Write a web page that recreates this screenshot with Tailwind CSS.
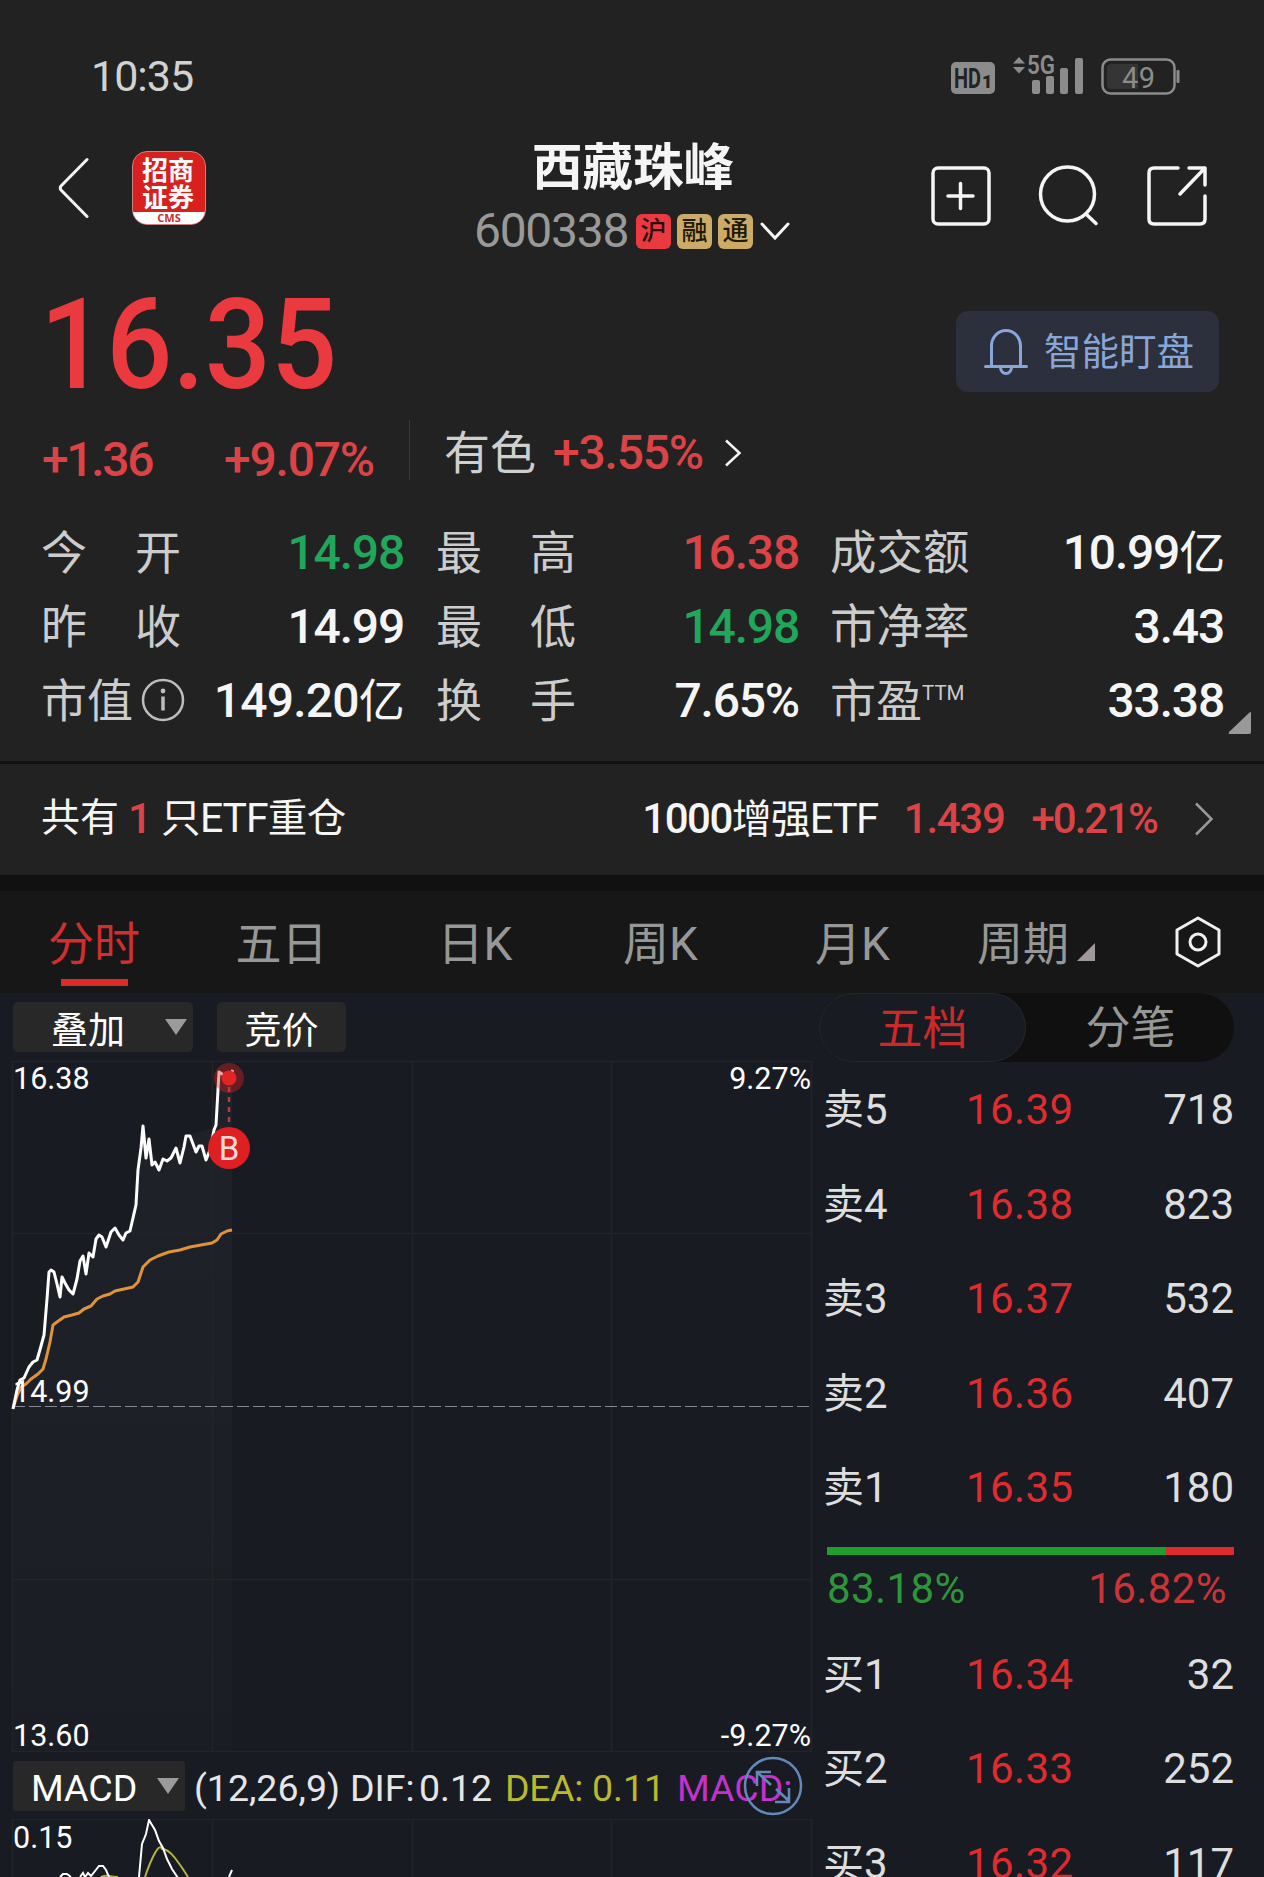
<!DOCTYPE html>
<html lang="zh-CN">
<head>
  <meta charset="UTF-8">
  <meta name="viewport" content="width=device-width, initial-scale=1.0">
  <script src="https://cdn.jsdelivr.net/npm/@tailwindcss/browser@4"></script>
  <title>西藏珠峰 600338</title>
</head>
<body class="w-[1264px] h-[1877px] overflow-hidden bg-[#191b23] font-[Roboto,'Noto_Sans_CJK_SC',sans-serif] leading-none whitespace-nowrap text-[#f5f5f5]">

  <div class="bg-[#222222] h-[761px]">
    <!-- Status bar -->
    <div class="h-[110px] pt-[41px] pl-[91px] pr-[83px] flex justify-between">
      <div class="h-[70px] flex items-center text-[43px] tracking-[-1px] text-[#d2d2d2]">10:35</div>
      <svg width="230" height="50" viewBox="950 50 230 50" class="mt-[9px]">
        <rect x="950" y="62" width="44" height="32" rx="5" fill="#8c8c8c"/>
        <text x="953" y="88" font-size="28" font-weight="700" textLength="27" lengthAdjust="spacingAndGlyphs" fill="#222">HD</text>
        <text x="981" y="88" font-size="18" font-weight="900" fill="#222">1</text>
        <path d="M1018 57l6 6.500h-12zM1018 73.500l6-6.500h-12z" fill="#8c8c8c"/>
        <text x="1026" y="74" font-size="25" font-weight="600" textLength="28" lengthAdjust="spacingAndGlyphs" fill="#8c8c8c">5G</text>
        <g fill="#8c8c8c">
          <rect x="1031" y="80" width="8" height="14" rx="2"/>
          <rect x="1045" y="76" width="8" height="18" rx="2"/>
          <rect x="1059" y="68" width="8" height="26" rx="2"/>
          <rect x="1074" y="58" width="8" height="36" rx="2"/>
        </g>
        <rect x="1101.500" y="59.500" width="72" height="34" rx="8" fill="none" stroke="#8c8c8c" stroke-width="2.500"/>
        <path d="M1110 64h27v25h-27q-4 0-4-4v-17q0-4 4-4z" fill="#353535"/>
        <rect x="1175.500" y="70" width="3" height="13" rx="1" fill="#8c8c8c"/>
        <text x="1121" y="87.500" font-size="29" textLength="33" fill="#8c8c8c">49</text>
      </svg>
    </div>

    <!-- Header -->
    <div class="h-[160px] flex items-start">
      <svg width="32" height="62" viewBox="0 0 32 62" class="ml-[58px] mt-[47px]" fill="none" stroke="#f5f5f5" stroke-width="3" stroke-linecap="round" stroke-linejoin="round"><path d="M29 2.500L3 29Q1.500 31 3 33L29 59.500"/></svg>
      <div class="ml-[42px] mt-[41px] w-[74px] h-[74px] rounded-[15px] overflow-hidden bg-[#d8201f] border border-[#c98080] flex flex-col items-center font-['Noto_Sans_CJK_SC',sans-serif] font-bold">
        <div class="w-[54px] h-[60px] pt-[3px] text-[26px] leading-[27px] whitespace-normal text-white">招商证券</div>
        <div class="w-full h-[12px] bg-white text-center text-[#c8302c] text-[11px] leading-[11px] font-['Open_Sans']">CMS</div>
      </div>
      <div class="ml-[267px] w-[320px] pt-[29px]">
        <h1 class="h-[56px] flex items-center justify-center text-[50.500px] font-bold pt-[2px]">西藏珠峰</h1>
        <div class="h-[72px] flex items-center">
          <span class="text-[48px] tracking-[-1.300px] text-[#999999] w-[163px] pl-[1px]">600338</span>
          <span class="w-[35px] h-[35px] rounded-[6px] bg-[#ea3a40] text-[#2b0a0c] text-[26px] font-medium flex items-center justify-center">沪</span>
          <span class="ml-[6px] w-[35px] h-[35px] rounded-[6px] bg-[#ccaa68] text-[#221a08] text-[26px] font-medium flex items-center justify-center">融</span>
          <span class="ml-[6px] w-[35px] h-[35px] rounded-[6px] bg-[#ccaa68] text-[#221a08] text-[26px] font-medium flex items-center justify-center">通</span>
          <svg width="32" height="20" viewBox="0 0 32 20" class="ml-[6px]" fill="none" stroke="#f5f5f5" stroke-width="3" stroke-linecap="round"><path d="M3 3l13 14L29 3"/></svg>
        </div>
      </div>
      <div class="ml-[137px] mt-[55px] flex gap-[46px] items-start">
        <svg width="62" height="62" viewBox="0 0 62 62" fill="none" stroke="#f5f5f5" stroke-width="3.500" stroke-linecap="round"><rect x="3" y="3" width="56" height="56" rx="5"/><path d="M18 31h25M30.500 18.500v25"/></svg>
        <svg width="62" height="62" viewBox="0 0 62 62" fill="none" stroke="#f5f5f5" stroke-width="3.500" stroke-linecap="round"><circle cx="29.500" cy="29" r="27"/><path d="M48 49l10 9.500"/></svg>
        <svg width="62" height="62" viewBox="0 0 62 62" fill="none" stroke="#f5f5f5" stroke-width="3.500" stroke-linecap="round" stroke-linejoin="round"><path d="M32 3H8Q3 3 3 8v46q0 5 5 5h46q5 0 5-5V31M43 3h16v17M59 3L34 29"/></svg>
      </div>
    </div>

    <!-- Price -->
    <div class="h-[150px] flex">
      <div class="w-[956px] pl-[40px] pt-[12px] text-[126px] font-medium text-[#ea3a40]"><span class="inline-block origin-left scale-x-[0.925]">16.35</span></div>
      <button class="mt-[41px] w-[263px] h-[81px] rounded-[12px] bg-[#2b303c] text-[#8aa5d8] flex items-center">
        <svg width="46" height="48" viewBox="0 0 46 48" class="ml-[27px]" fill="none" stroke="#8aa5d8" stroke-width="3" stroke-linecap="round"><path d="M2.500 38.500h41M8.500 38V18a14.500 15.500 0 0 1 29 0v20M17.500 39.500a5.500 6 0 0 0 11 0"/></svg>
        <span class="ml-[15px] text-[37.500px] pt-[2px]">智能盯盘</span>
      </button>
    </div>

    <div class="h-[86px] flex text-[48px] font-medium text-[#dc4347]">
      <div class="w-[182px] pl-[42px] pt-[16px] tracking-[-2.300px]">+1.36</div>
      <div class="w-[227px] pl-[42px] pt-[16px] tracking-[-1.200px]">+9.07%</div>
      <div class="w-px h-[60px] bg-[#383838]"></div>
      <div class="w-[143px] pl-[34px] pt-[10px] text-[46px] font-normal text-[#cfcfcf]">有色</div>
      <div class="w-[171px] tracking-[-1.200px] pt-[9px]">+3.55%</div>
      <svg width="18" height="28" viewBox="0 0 18 28" class="mt-[19px]" fill="none" stroke="#f5f5f5" stroke-width="2.500"><path d="M2 1.500L15.500 14 2 26.500"/></svg>
    </div>

    <!-- Quote stats -->
    <div class="relative pt-[9px] pl-[41px] grid grid-cols-[363px_395px_425px] auto-rows-[74px] items-center text-[48px] font-medium tracking-[-1.200px]">
      <div class="flex justify-between items-center"><span class="w-[140px] flex justify-between text-[46px] font-normal tracking-normal text-[#cccccc] pt-[2px]"><i class="not-italic">今</i><i class="not-italic">开</i></span><span class="pt-[2px] text-[#21a75c]">14.98</span></div>
      <div class="pl-[32px] flex justify-between items-center"><span class="w-[140px] flex justify-between text-[46px] font-normal tracking-normal text-[#cccccc] pt-[2px]"><i class="not-italic">最</i><i class="not-italic">高</i></span><span class="pt-[2px] text-[#dc4347]">16.38</span></div>
      <div class="pl-[31px] flex justify-between items-center"><span class="text-[46.500px] font-normal tracking-normal text-[#cccccc] pt-[2px]">成交额</span><span class="pt-[2px]">10.99<span class="text-[46px] font-normal">亿</span></span></div>

      <div class="flex justify-between items-center"><span class="w-[140px] flex justify-between text-[46px] font-normal tracking-normal text-[#cccccc] pt-[2px]"><i class="not-italic">昨</i><i class="not-italic">收</i></span><span class="pt-[2px]">14.99</span></div>
      <div class="pl-[32px] flex justify-between items-center"><span class="w-[140px] flex justify-between text-[46px] font-normal tracking-normal text-[#cccccc] pt-[2px]"><i class="not-italic">最</i><i class="not-italic">低</i></span><span class="pt-[2px] text-[#21a75c]">14.98</span></div>
      <div class="pl-[31px] flex justify-between items-center"><span class="text-[46.500px] font-normal tracking-normal text-[#cccccc] pt-[2px]">市净率</span><span class="pt-[2px]">3.43</span></div>

      <div class="flex justify-between items-center">
        <span class="flex items-center text-[46px] font-normal tracking-normal text-[#cccccc]"><span class="pt-[2px]">市值</span>
          <svg width="44" height="44" viewBox="0 0 44 44" class="ml-[8px]" fill="none" stroke="#bdbdbd" stroke-width="2.500"><circle cx="22" cy="22" r="20"/><path d="M22 18.500v14" stroke-width="3.500"/><circle cx="22" cy="13" r="2.400" fill="#bdbdbd" stroke="none"/></svg>
        </span>
        <span class="pt-[2px] tracking-[-0.800px]">149.20<span class="text-[46px] font-normal">亿</span></span>
      </div>
      <div class="pl-[32px] flex justify-between items-center"><span class="w-[140px] flex justify-between text-[46px] font-normal tracking-normal text-[#cccccc] pt-[2px]"><i class="not-italic">换</i><i class="not-italic">手</i></span><span class="pt-[2px]">7.65%</span></div>
      <div class="pl-[31px] flex justify-between items-center"><span class="flex text-[46px] font-normal tracking-normal text-[#cccccc] pt-[2px]">市盈<span class="mt-[5px] text-[20.500px]">TTM</span></span><span class="pt-[2px]">33.38</span></div>
      <svg width="24" height="24" viewBox="0 0 24 24" class="absolute left-[1228px] top-[205px]"><path d="M23 2v19q0 2-2 2H2q-2 0-1-2L21 2q2-2 2 0z" fill="#999"/></svg>
    </div>
  </div>

  <!-- ETF holdings -->
  <div class="h-[130px] bg-[#222222] border-t-[3px] border-b-16 border-[#111111] flex items-center pl-[41px] pr-[50px] pb-[2px] text-[42px]">
    <span class="w-[87px] text-[39px]">共有</span>
    <span class="w-[33px] text-[#dc4347] font-medium">1</span>
    <span class="text-[39.500px] tracking-[-0.600px]">只<span class="text-[41px] tracking-[-1px]">ETF</span>重仓</span>
    <span class="ml-auto tracking-[-1px]"><span class="font-medium tracking-[-1.500px]">1000</span><span class="text-[40px]">增强</span><span class="tracking-[-1.500px]">ETF</span></span>
    <span class="ml-[26px] text-[#dc4347] font-medium tracking-[-1.300px]">1.439</span>
    <span class="ml-[27px] text-[#dc4347] font-medium tracking-[-2px]">+0.21%</span>
    <svg width="20" height="34" viewBox="0 0 20 34" class="ml-[37px]" fill="none" stroke="#999" stroke-width="2.500"><path d="M2 1.500L17.500 17 2 32.500"/></svg>
  </div>

  <!-- Period tabs -->
  <div class="h-[102px] bg-[#171717] flex text-[46px] text-[#979797] leading-[107px]">
    <div class="relative w-[188px] text-center text-[#cf2f2f]">分时<div class="absolute left-[61px] bottom-[7px] w-[67px] h-[7px] bg-[#dc2c2a]"></div></div>
    <div class="w-[187px] text-center">五日</div>
    <div class="w-[200px] text-center">日K</div>
    <div class="w-[171px] text-center">周K</div>
    <div class="w-[213px] text-center">月K</div>
    <div class="w-[216px] pl-[18px] flex">周期
      <svg width="18" height="18" viewBox="0 0 18 18" class="ml-[8px] mt-[52px]"><path d="M18 0v18H0z" fill="#a09898"/></svg>
    </div>
    <svg width="46" height="52" viewBox="0 0 46 52" class="mt-[25px]" fill="none" stroke="#f0f0f0" stroke-width="3" stroke-linejoin="round"><path d="M23 2L44 14v24L23 50 2 38V14z"/><circle cx="23" cy="26" r="8"/></svg>
  </div>

  <div class="h-[884px] flex">
    <!-- Chart column -->
    <div class="w-[819px]">
      <div class="h-[68px] pt-[9px] pl-[13px] flex gap-[24px] text-[37px] text-white">
        <button class="w-[180px] h-[50px] rounded-[5px] bg-[#282828] flex items-center pl-[38px] pt-[8px]">叠加
          <svg width="22" height="16" viewBox="0 0 22 16" class="ml-[40px] mb-[8px]"><path d="M0 0h22L11 16z" fill="#9b9b9b"/></svg>
        </button>
        <button class="w-[129px] h-[50px] rounded-[5px] bg-[#282828] flex items-center justify-center pt-[8px]">竞价</button>
      </div>

      <svg width="819" height="694" viewBox="0 1061 819 694" class="block" font-size="30.500" fill="#fff">
        <defs>
          <linearGradient id="area" x1="0" y1="0" x2="0" y2="1"><stop offset="0" stop-color="#fff" stop-opacity=".03"/><stop offset="1" stop-color="#fff" stop-opacity=".01"/></linearGradient>
        </defs>
        <path d="M13 1405L43 1340 50 1271 72 1290 97 1240 129 1228 139 1160 143 1126 160 1170 187 1135 214 1128 219 1071 232 1071V1751H13z" fill="url(#area)"/>
        <path d="M12.500 1061.500H811.500V1751.500H12.500zM212.500 1061V1752M412.500 1061V1752M611.500 1061V1752M13 1233.500H811M13 1579.500H811" fill="none" stroke="#232426" stroke-width="1.500"/>
        <path d="M13 1406.500H811" stroke="#868890" stroke-width="1.200" stroke-dasharray="12 4"/>
        <path d="M13 1408L17 1396 21 1387 26 1384 31 1379 38 1374 43 1369 46 1359 50 1342 53 1325 57 1322 64 1317 72 1315 79 1313 84 1309 91 1306 97 1299 103 1296 110 1294 115 1291 124 1289 133 1287 138 1282 141 1273 143 1267 150 1260 158 1256 169 1252 180 1250 190 1247 201 1245 212 1243 217 1240 221 1234 227 1231 232 1230" fill="none" stroke="#e0933a" stroke-width="3" stroke-linejoin="round"/>
        <path d="M13 1409L17 1390 20 1380 24 1378 29 1367 33 1362 37 1360 41 1346 44 1335 47 1299 49 1272 51 1270 54 1272 57 1284 60 1297 62 1277 65 1283 69 1290 73 1294 77 1279 80 1261 83 1256 86 1274 89 1253 93 1257 96 1239 99 1235 102 1237 106 1247 111 1232 115 1228 119 1235 123 1240 126 1233 130 1231 136 1205 138 1170 141 1148 143 1126 146 1158 149 1139 152 1165 155 1162 159 1170 163 1159 167 1161 171 1158 176 1148 180 1163 184 1147 186 1136 190 1136 196 1152 199 1146 202 1146 206 1160 210 1150 214 1130 216 1125 219 1072 222 1074 228 1078 233 1070" fill="none" stroke="#fff" stroke-width="3" stroke-linejoin="round"/>
        <text x="13" y="1089">16.38</text>
        <text x="811" y="1089" text-anchor="end">9.27%</text>
        <text x="13" y="1402">14.99</text>
        <text x="13" y="1746">13.60</text>
        <text x="811" y="1746" text-anchor="end">-9.27%</text>
        <circle cx="229" cy="1078" r="15" fill="#dd2222" fill-opacity=".4"/>
        <circle cx="229" cy="1078" r="7.500" fill="#e22424"/>
        <path d="M229 1087v37" stroke="#b93a3e" stroke-width="2.500" stroke-dasharray="5 5"/>
        <circle cx="229" cy="1148" r="21" fill="#de2023"/>
        <text x="229" y="1159.500" text-anchor="middle" font-size="33" fill="#ffd9d9">B</text>
      </svg>

      <!-- MACD legend -->
      <div class="relative h-[64px] pt-[6px] pl-[13px] flex text-[37.500px] leading-[55px]">
        <button class="w-[172px] h-[50px] rounded-[3px] bg-[#282828] text-white flex items-center pl-[18px] pt-[4px]">MACD
          <svg width="22" height="16" viewBox="0 0 22 16" class="ml-[20px] mb-[5px]"><path d="M0 0h22L11 16z" fill="#9b9b9b"/></svg>
        </button>
        <span class="ml-[9px] w-[156px] text-[#e6e6e6]">(12,26,9)</span>
        <span class="w-[69px] text-[#e6e6e6]">DIF:</span>
        <span class="w-[86px] text-[#e6e6e6]">0.12</span>
        <span class="w-[87px] tracking-[-0.400px] text-[#b9b92e]">DEA:</span>
        <span class="w-[85px] text-[#b9b92e]">0.11</span>
        <span class="text-[#c233cc]">MACD:</span>
        <svg width="60" height="60" viewBox="0 0 60 60" class="absolute left-[743px] top-[1px]" fill="none" stroke="#6388ba" stroke-width="2.500"><circle cx="30" cy="30" r="28"/><path d="M28 29L14 16M28 16H14v14M33 33l13 12M32 46h14V32"/></svg>
      </div>

      <svg width="819" height="58" viewBox="0 1819 819 58" class="block" fill="none">
        <path d="M12.500 1877V1819.500H811.500V1877M212.500 1820V1877M412.500 1820V1877M611.500 1820V1877" stroke="#232426" stroke-width="1.500"/>
        <path d="M145 1877Q150 1862 155 1853T162 1849Q168 1849 175 1858T188 1877M101 1877Q104 1875 109 1876T118 1877" stroke="#b3b345" stroke-width="2"/>
        <path d="M60 1877L63 1874 67 1874 71 1877M80 1877L83 1873 85 1877 88 1873 91 1876 95 1871 99 1866 103 1866 106 1870 109 1877M139 1877L142 1844 146 1834 149 1820 155 1830 159 1841 163 1848 167 1859 172 1869 178 1878M229 1877L232 1870" stroke="#fff" stroke-width="2"/>
        <text x="13" y="1848" font-size="30.500" fill="#fff">0.15</text>
      </svg>
    </div>

    <!-- Order book column -->
    <div class="w-[445px] text-[42px] text-[#dedede]">
      <div class="w-[415px] h-[69px] rounded-full bg-[#101010] flex text-[45px] leading-[72px] text-center">
        <div class="w-[207px] h-[69px] rounded-full bg-[#191b23] border border-[#26272a] text-[#cc2a2a]">五档</div>
        <div class="w-[208px] pl-[1px] text-[#979797]">分笔</div>
      </div>

      <div class="w-[415px] pt-[1px] pl-[4px] grid grid-cols-[143px_1fr_auto] auto-rows-[94.5px] items-center">
        <div><span class="text-[41px]">卖</span>5</div><div class="text-[#de2c2f] tracking-[0.4px]">16.39</div><div>718</div>
        <div><span class="text-[41px]">卖</span>4</div><div class="text-[#de2c2f] tracking-[0.4px]">16.38</div><div>823</div>
        <div><span class="text-[41px]">卖</span>3</div><div class="text-[#de2c2f] tracking-[0.4px]">16.37</div><div>532</div>
        <div><span class="text-[41px]">卖</span>2</div><div class="text-[#de2c2f] tracking-[0.4px]">16.36</div><div>407</div>
        <div><span class="text-[41px]">卖</span>1</div><div class="text-[#de2c2f] tracking-[0.4px]">16.35</div><div>180</div>
      </div>

      <div class="mt-[11px] ml-[8px] w-[407px] h-[8px] bg-[#dd2a2c]"><div class="h-full bg-[#219d2e]" style="width: 83.18%"></div></div>
      <div class="ml-[8px] w-[400px] h-[68px] flex justify-between items-center tracking-[0.4px]">
        <span class="text-[#2e963a]">83.18%</span>
        <span class="text-[#c93437]">16.82%</span>
      </div>

      <div class="mt-[5px] w-[415px] pl-[4px] grid grid-cols-[143px_1fr_auto] auto-rows-[94.5px] items-center">
        <div><span class="text-[41px]">买</span>1</div><div class="text-[#de2c2f] tracking-[0.4px]">16.34</div><div class="text-right">32</div>
        <div><span class="text-[41px]">买</span>2</div><div class="text-[#de2c2f] tracking-[0.4px]">16.33</div><div class="text-right">252</div>
        <div><span class="text-[41px]">买</span>3</div><div class="text-[#de2c2f] tracking-[0.4px]">16.32</div><div class="text-right">117</div>
      </div>
    </div>
  </div>
</body>
</html>
